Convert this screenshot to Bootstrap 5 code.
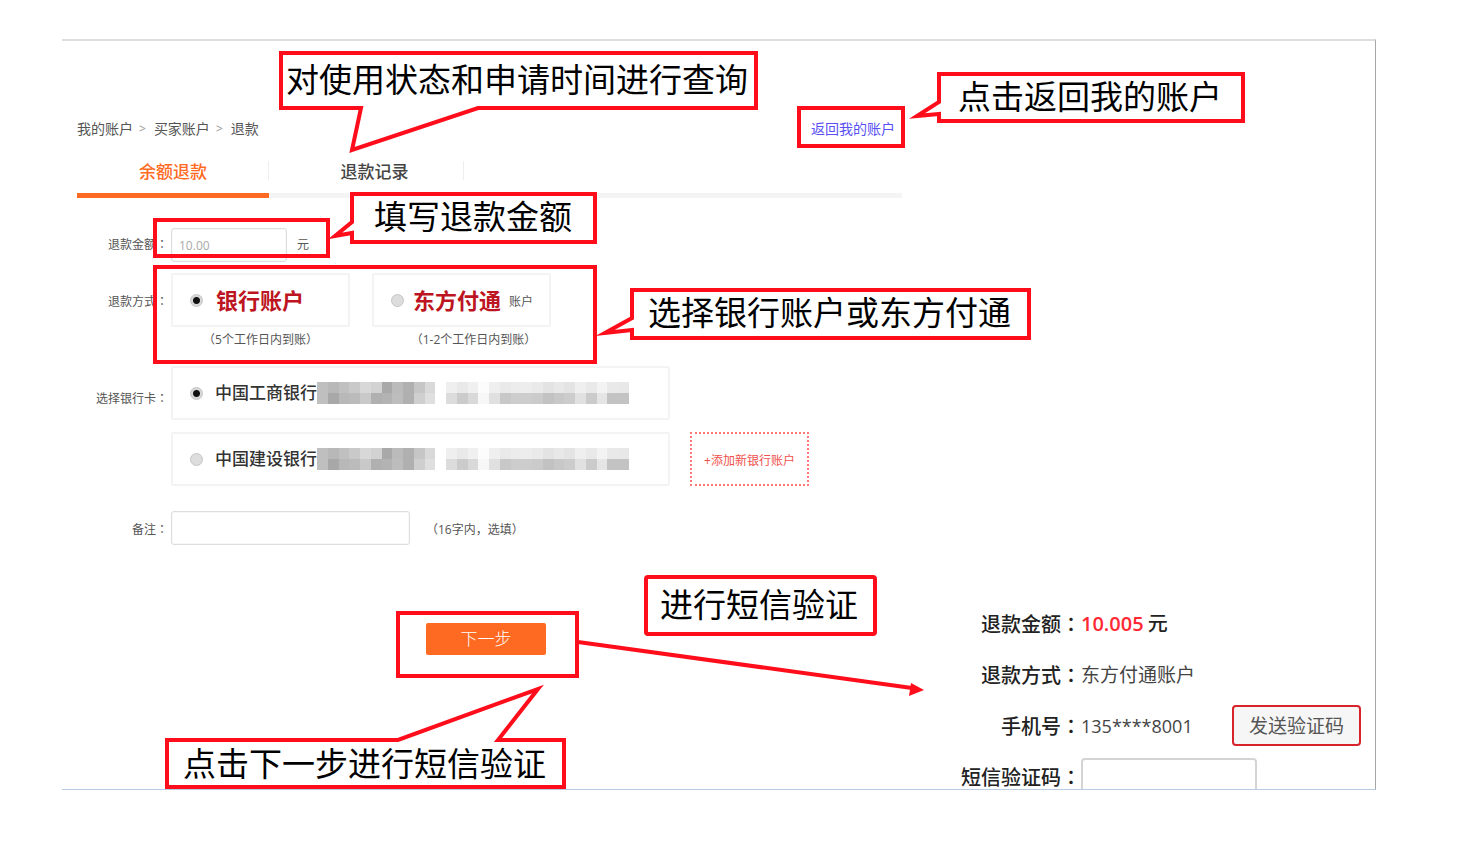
<!DOCTYPE html>
<html lang="zh-CN">
<head>
<meta charset="utf-8">
<meta name="viewport" content="width=device-width, initial-scale=1">
<title>余额退款</title>
<link href="https://cdn.jsdelivr.net/npm/bootstrap@5.3.0/dist/css/bootstrap.min.css" rel="stylesheet">
<style>
body{font-family:"Open Sans","Noto Sans CJK SC",sans-serif;font-size:12px;line-height:18px;color:#555;background:#fff}
.sheet{margin:39px 84px 40px 62px;border-top:2px solid #ddd;border-right:1px solid #a6a6a6;border-bottom:1px solid #b8cce4;overflow:hidden}
.refund{padding:78px 59px 134px 0}
.refund-head{padding-left:15px}
.crumbs{font-size:14px;line-height:20px}
.crumbs a{color:#555;text-decoration:none}
.crumbs a.back{color:#5a50f5;margin-right:7px}
.crumbs .sep{font-size:12px;color:#999;margin:0 8px 0 6px}
.tabs{border-bottom:5px solid #f4f4f4;margin-top:12px}
.tabs a{width:192px;height:47px;line-height:42px;margin-bottom:-5px;border-bottom:5px solid transparent;text-align:center;font-size:17px;font-weight:500;color:#444;text-decoration:none;position:relative}
.tabs a+a{width:195px;padding-left:16px}
.tabs a.on{color:#ff6a22;border-color:#ff6a22}
.tabs a::after{content:"";position:absolute;right:0;top:10px;height:19px;border-right:1px solid #eee}
.row-amount{margin-top:30px}
.row-way{margin-top:11px}
.row-bank{margin-top:17px}
.row-note{margin-top:25px}
.lbl{width:109px;padding-right:3px;text-align:right;flex:none}
.colon{font-family:"Noto Sans CJK TC",sans-serif;line-height:1}
.field{height:34px;border:1px solid #ddd;border-radius:3px;padding:0 7px;font-size:12px;color:#aaa;box-shadow:inset 0 0 0 1px #f8f8f8}
.amount{width:116px}
.note{width:239px}
.unit{margin-left:10px}
.tile{height:54px;border:2px solid #f3f3f3;border-radius:2px}
.tile.way{width:179px;padding-left:17px}
.tile.bank{width:499px;padding-left:17px;font-size:17px;font-weight:500;color:#333}
.way-gap{margin-left:22px}
.banks{gap:12px}
.brand{font-size:22px;font-weight:700;color:#bd1421;margin-left:13px}
.brand.pay{margin-left:9px}
.bankname{margin-left:12px}
input[type=radio]{appearance:none;width:13px;height:13px;border-radius:50%;border:1px solid #c4c4c4;background:#ddd;flex:none;margin:0}
input[type=radio]:checked{background:radial-gradient(circle,#111 0 3px,#d8d8d8 4px)}
.add{width:119px;height:54px;border:2px dotted #f77;background:#fff;color:#f0504c;margin-left:20px;padding:4px 0 0}
.next{width:120px;height:32px;border:0;border-radius:2px;background:#ff6a22;color:#fff;font-size:17px;font-weight:300;line-height:32px;padding:0;margin:78px 0 0 364px}
.verify{width:414px;margin-bottom:-13px;font-size:19px;color:#444}
.verify .line{height:51px}
.verify .vl{width:120px;text-align:right;font-size:20px;font-weight:500;color:#222;flex:none}
.sum{font-size:20px;font-weight:600;color:#ff2a35}
.phone{font-size:18px;width:151px}
.send{width:129px;height:41px;border:2px solid #d9232b;border-radius:4px;background:#f6f6f6;color:#555;font-size:19px;padding:0}
.code{width:176px;height:38px;border:2px solid #d4d4d4;border-radius:4px}
/* annotation layer over the form */
.marks{position:absolute;left:-62px;top:-41px;pointer-events:none}
.say{position:absolute;font-size:33px;line-height:40px;color:#000;white-space:nowrap}
.say-query{left:286px;top:60px}
.say-back{left:958px;top:77px}
.say-amount{left:374px;top:197px}
.say-way{left:648px;top:293px}
.say-sms{left:660px;top:585px}
.say-next{left:183px;top:744px}
</style>
</head>
<body>
<main class="sheet position-relative d-flex">
  <form class="refund flex-grow-1">
    <div class="refund-head">
      <nav class="crumbs d-flex" aria-label="路径">
        <a href="#">我的账户</a><span class="sep">&gt;</span><a href="#">买家账户</a><span class="sep">&gt;</span><span>退款</span>
        <a href="#" class="back ms-auto">返回我的账户</a>
      </nav>
      <div class="tabs d-flex"><a href="#" class="on">余额退款</a><a href="#">退款记录</a></div>
    </div>

    <div class="row-amount d-flex align-items-center">
      <label class="lbl" for="amount">退款金额<span class="colon" lang="zh-TW">：</span></label>
      <input id="amount" class="field amount" value="10.00"><span class="unit">元</span>
    </div>

    <div class="row-way d-flex">
      <span class="lbl pt-3 mt-1">退款方式<span class="colon" lang="zh-TW">：</span></span>
      <div>
        <label class="tile way d-flex align-items-center"><input type="radio" name="way" checked><span class="brand">银行账户</span></label>
        <div class="text-center mt-1">（5个工作日内到账）</div>
      </div>
      <div class="way-gap">
        <label class="tile way d-flex align-items-center"><input type="radio" name="way"><span class="brand pay">东方付通</span><span class="ms-2 mt-1">账户</span></label>
        <div class="text-center mt-1 ps-4">（1-2个工作日内到账）</div>
      </div>
    </div>

    <div class="row-bank d-flex">
      <span class="lbl pt-4">选择银行卡<span class="colon" lang="zh-TW">：</span></span>
      <div class="banks d-grid">
        <label class="tile bank d-flex align-items-center"><input type="radio" name="bank" checked><span class="bankname">中国工商银行</span><svg class="mosaic" width="312" height="22"></svg></label>
        <label class="tile bank d-flex align-items-center"><input type="radio" name="bank"><span class="bankname">中国建设银行</span><svg class="mosaic" width="312" height="22"></svg></label>
      </div>
      <button type="button" class="add align-self-end">+添加新银行账户</button>
    </div>

    <div class="row-note d-flex align-items-center">
      <label class="lbl pt-1" for="note">备注<span class="colon" lang="zh-TW">：</span></label>
      <input id="note" class="field note"><span class="ms-3 pt-1">（16字内，选填）</span>
    </div>
    <button type="button" class="next d-block">下一步</button>
  </form>

  <section class="verify align-self-end flex-shrink-0">
    <div class="line d-flex align-items-center"><span class="vl">退款金额<span class="colon" lang="zh-TW">：</span></span><span class="sum">10.005</span><span class="vl w-auto ms-1">元</span></div>
    <div class="line d-flex align-items-center"><span class="vl">退款方式<span class="colon" lang="zh-TW">：</span></span><span>东方付通账户</span></div>
    <div class="line d-flex align-items-center"><span class="vl">手机号<span class="colon" lang="zh-TW">：</span></span><span class="phone">135****8001</span><button type="button" class="send">发送验证码</button></div>
    <div class="line d-flex align-items-center"><label class="vl" for="code">短信验证码<span class="colon" lang="zh-TW">：</span></label><input id="code" class="code"></div>
  </section>

  <div class="marks">
    <svg width="1376" height="790" fill="none" stroke="#ff0d1b" stroke-width="4" stroke-miterlimit="12">
      <path d="M799 108H903V146H799ZM155 220H328V256H155ZM155 267H595V362H155ZM398 613H577V676H398Z"/>
      <g fill="#fff">
        <path d="M281 53H756V108H478L352 150L361 108H281Z"/>
        <path d="M939 74H1243V121H939V114L917 116L939 102Z"/>
        <path d="M352 194H595V242H352V233L335 236L352 222Z"/>
        <path d="M632 290H1029V338H632V330L605 333L632 318Z"/>
        <path d="M167 740H398L538 689L498 740H564V787H167Z"/>
        <rect x="646" y="577" width="229" height="57" rx="2"/>
      </g>
      <path d="M578 642L912 688"/>
      <path d="M911 683L924 690L909 696Z" fill="#ff0d1b" stroke="none"/>
    </svg>
    <span class="say say-query">对使用状态和申请时间进行查询</span>
    <span class="say say-back">点击返回我的账户</span>
    <span class="say say-amount">填写退款金额</span>
    <span class="say say-way">选择银行账户或东方付通</span>
    <span class="say say-sms">进行短信验证</span>
    <span class="say say-next">点击下一步进行短信验证</span>
  </div>
</main>
<script src="https://cdn.jsdelivr.net/npm/bootstrap@5.3.0/dist/js/bootstrap.bundle.min.js"></script>
<script>
// grey levels of the masked card number, two rows of cells
const levels = [
  'bf b8 c0 c9 d8 d2 a9 bb b0 c6 d9 ff ef e9 f0 fc ef e9 ec ed ea e3 e8 e4 ef e9 f3 e9 e8',
  'bf a8 b8 bb c9 b0 b3 bd b0 cf df ff dc cb d9 f7 e0 c8 cd cd cb c2 c8 cc e1 cb e5 c3 c3'
];
document.querySelectorAll('.mosaic').forEach(svg => {
  const cell = 312 / 29;
  svg.innerHTML = levels.map((row, r) => row.split(' ').map((g, i) =>
    `<rect x="${Math.round(i * cell)}" y="${r * 11}" width="11" height="11" fill="#${g}${g}${g}"/>`).join('')).join('');
});
</script>
</body>
</html>
